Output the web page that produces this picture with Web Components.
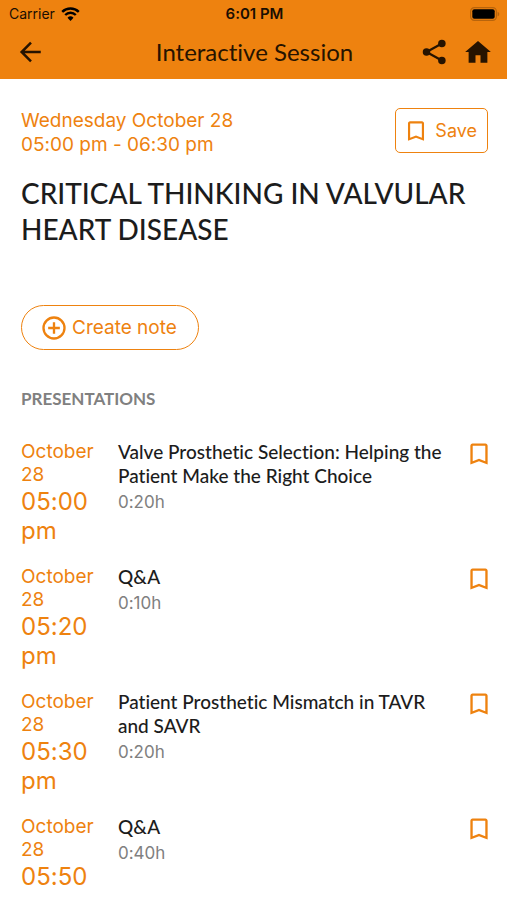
<!DOCTYPE html>
<html lang="en">
<head>
<meta charset="utf-8">
<meta name="viewport" content="width=device-width, initial-scale=1">
<title>Interactive Session</title>
<style>
  :root {
    --accent: #ee820f;
    --ink: #1c1c1c;
    --muted: #808080;
    --ui: Inter, "Liberation Sans", sans-serif;
    --display: Lato, "Open Sans", sans-serif;
  }
  body { margin: 0; background: #fff; color: var(--ink); font-family: var(--ui); font-variant-ligatures: none; }
</style>
</head>
<body>
<session-page></session-page>
<script>
  const define = (name, html) => customElements.define(name, class extends HTMLElement {
    constructor() {
      super();
      const template = document.createElement('template');
      template.innerHTML = html;
      this.attachShadow({ mode: 'open' }).append(template.content.cloneNode(true));
    }
  });

  define('bookmark-icon', `
    <style>
      :host { display: block; flex: none; width: 28px; height: 28px; }
      :host([small]) { width: 26px; height: 26px; }
      svg { display: block; width: 100%; height: 100%; }
    </style>
    <svg viewBox="0 0 24 24" fill="currentColor" aria-hidden="true"><path d="M17.500 3h-11C5.400 3 4.600 3.900 4.600 5v16l7.400-2.800 7.400 2.800V5c0-1.100-.8-2-1.900-2zm-.1 15.300L12 16.100l-5.400 2.200V5h10.800z"/></svg>`);

  define('status-bar', `
    <style>
      :host { display: grid; grid-template-columns: 1fr auto 1fr; align-items: center; height: 28px; padding: 0 7px 0 9px; color: #1a0e02; font-size: 14px; line-height: 20px; }
      .carrier { display: flex; align-items: center; gap: 6px; }
      .time { font-size: 15px; font-weight: 600; }
      .battery { justify-self: end; }
      svg { display: block; }
    </style>
    <span class="carrier">Carrier
      <svg width="19" height="14" viewBox="0 0 19 14" aria-hidden="true"><g fill="none" stroke="#000" stroke-width="2.400"><path d="M1.200 4.900a11.800 11.800 0 0 1 16.600 0"/><path d="M4.200 8a7.500 7.500 0 0 1 10.600 0"/></g><path d="M9.500 14 6.500 10.800a4.300 4.300 0 0 1 6 0z"/></svg>
    </span>
    <span class="time">6:01 PM</span>
    <svg class="battery" width="30" height="14" viewBox="0 0 30 14" aria-hidden="true"><rect x=".6" y=".6" width="25.800" height="12.800" rx="3.800" fill="none" stroke="#b8640c" stroke-width="1.200"/><rect x="2.300" y="2.300" width="22.400" height="9.400" rx="2"/><path d="M27.600 4.700c2.200.8 2.200 3.800 0 4.600z" fill="#b8640c"/></svg>`);

  define('app-bar', `
    <style>
      :host { display: grid; grid-template-columns: 1fr auto 1fr; align-items: center; height: 48px; padding: 0 14px 0 16px; color: #261300; }
      h1 { margin: 0; font: 400 24px/32px var(--display); font-variant-ligatures: none; }
      button { display: block; padding: 0; border: 0; background: none; color: inherit; }
      nav { display: flex; justify-self: end; gap: 14px; }
      svg { display: block; width: 30px; height: 30px; fill: currentColor; }
    </style>
    <button type="button" aria-label="Back"><svg viewBox="0 0 24 24"><path d="m12 4.500-7.500 7.500 7.500 7.500M4.500 12h15.300" fill="none" stroke="currentColor" stroke-width="2"/></svg></button>
    <h1>Interactive Session</h1>
    <nav>
      <button type="button" aria-label="Share"><svg viewBox="0 0 24 24"><path d="M18.300 5.200 6 12l12.300 6.800" fill="none" stroke="currentColor" stroke-width="1.800"/><circle cx="18.300" cy="5.200" r="3"/><circle cx="6" cy="12" r="3"/><circle cx="18.300" cy="18.800" r="3"/></svg></button>
      <button type="button" aria-label="Home"><svg viewBox="0 0 24 24"><path d="M10 20.500v-6h4v6h5.500V12h2.800L12 3.200 1.700 12h2.800v8.500z"/></svg></button>
    </nav>`);

  define('outline-button', `
    <style>
      :host { display: block; }
      button { display: flex; align-items: center; gap: 6px; height: 45px; padding: 0 10px 0 7px; border: 1px solid var(--accent); border-radius: 5px; background: #fff; color: var(--accent); font: 400 18px/24px var(--ui); white-space: nowrap; }
      :host([pill]) button { gap: 4px; padding: 0 21px 0 18px; border-radius: 23px; font-size: 19px; }
    </style>
    <button type="button"><slot name="icon"></slot><slot></slot></button>`);

  define('session-header', `
    <style>
      :host { display: block; }
      .top { display: flex; justify-content: space-between; align-items: flex-start; }
      .when { padding-top: 1px; color: var(--accent); font-size: 19px; line-height: 24px; }
      h2 { margin: 18px 0 58px; font: 500 28px/36px var(--display); }
      .note { display: flex; }
      svg { display: block; width: 28px; height: 28px; }
    </style>
    <div class="top">
      <div class="when"><slot name="date"></slot><br><slot name="time"></slot></div>
      <outline-button><bookmark-icon slot="icon" small></bookmark-icon>Save</outline-button>
    </div>
    <h2><slot></slot></h2>
    <div class="note">
      <outline-button pill><svg slot="icon" viewBox="0 0 24 24" fill="none" stroke="currentColor" stroke-width="2" aria-hidden="true"><circle cx="12" cy="12" r="9"/><path d="M12 7v10M7 12h10"/></svg>Create note</outline-button>
    </div>`);

  define('presentation-item', `
    <style>
      :host { display: grid; grid-template-columns: 76px 1fr auto; column-gap: 21px; min-height: 105px; }
      .when { color: var(--accent); font-size: 19px; line-height: 23px; }
      .time { margin-top: 1px; font-size: 24px; line-height: 29px; }
      h4 { margin: 0; font: 500 19px/24px var(--display); font-variant-ligatures: none; max-width: 330px; }
      .length { margin-top: 2px; color: var(--muted); font-size: 17px; line-height: 24px; }
      button { display: block; align-self: start; padding: 0; border: 0; background: none; color: var(--accent); }
    </style>
    <div class="when"><slot name="date"></slot><div class="time"><slot name="time"></slot></div></div>
    <div><h4><slot></slot></h4><div class="length"><slot name="length"></slot></div></div>
    <button type="button" aria-label="Bookmark presentation"><bookmark-icon></bookmark-icon></button>`);

  define('presentation-list', `
    <style>
      :host { display: block; margin-top: 38px; }
      h3 { margin: 0 0 30px; color: var(--muted); font: 700 17px/22px var(--display); }
      .items { display: grid; gap: 20px; }
    </style>
    <h3>PRESENTATIONS</h3>
    <div class="items"><slot></slot></div>`);

  define('session-page', `
    <style>
      :host { display: flex; flex-direction: column; height: 100vh; overflow: hidden; }
      header { flex: none; background: var(--accent); padding-bottom: 3px; }
      main { flex: 1; min-height: 0; overflow: auto; scrollbar-width: none; padding: 29px 19px 0 21px; }
      presentation-list { margin-right: -5px; }
    </style>
    <header><status-bar></status-bar><app-bar></app-bar></header>
    <main>
      <session-header><span slot="date">Wednesday October 28</span><span slot="time">05:00 pm - 06:30 pm</span>CRITICAL THINKING IN VALVULAR HEART DISEASE</session-header>
      <presentation-list>
        <presentation-item><span slot="date">October 28</span><span slot="time">05:00 pm</span>Valve Prosthetic Selection: Helping the Patient Make the Right Choice<span slot="length">0:20h</span></presentation-item>
        <presentation-item><span slot="date">October 28</span><span slot="time">05:20 pm</span>Q&amp;A<span slot="length">0:10h</span></presentation-item>
        <presentation-item><span slot="date">October 28</span><span slot="time">05:30 pm</span>Patient Prosthetic Mismatch in TAVR and SAVR<span slot="length">0:20h</span></presentation-item>
        <presentation-item><span slot="date">October 28</span><span slot="time">05:50</span>Q&amp;A<span slot="length">0:40h</span></presentation-item>
      </presentation-list>
    </main>`);
</script>
</body>
</html>
